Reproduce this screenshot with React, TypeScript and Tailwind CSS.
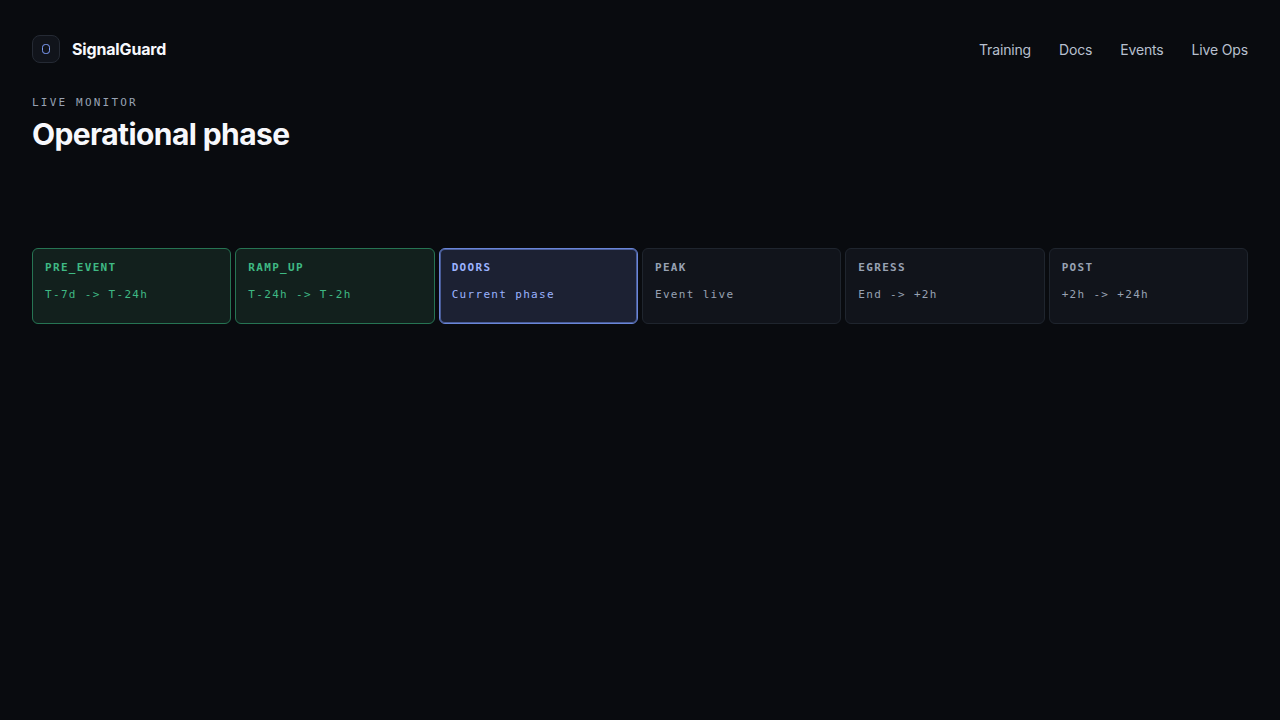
import React from 'react'

type PhaseState = 'done' | 'current' | 'upcoming'

interface Phase {
  name: string
  window: string
  state: PhaseState
}

const links = ['Training', 'Docs', 'Events', 'Live Ops']

const phases: Phase[] = [
  { name: 'PRE_EVENT', window: 'T-7d -> T-24h', state: 'done' },
  { name: 'RAMP_UP', window: 'T-24h -> T-2h', state: 'done' },
  { name: 'DOORS', window: 'Current phase', state: 'current' },
  { name: 'PEAK', window: 'Event live', state: 'upcoming' },
  { name: 'EGRESS', window: 'End -> +2h', state: 'upcoming' },
  { name: 'POST', window: '+2h -> +24h', state: 'upcoming' },
]

const stateStyles: Record<PhaseState, string> = {
  done: 'border-[#267453] bg-[#12201d] text-[#3fb984]',
  current: 'border-[#6a86d8] bg-[#1c2133] text-[#9bb3ff] inset-ring inset-ring-[#4a5d99]',
  upcoming: 'border-[#1f252e] bg-[#11141b] text-[#98a2b3]',
}

const Header = () => (
  <header className="flex items-center justify-between tracking-[-0.01em]">
    <a href="#" className="flex items-center gap-3">
      <span className="flex size-7 items-center justify-center rounded-lg border border-[#252a34] bg-[#11141b]">
        <svg width="8" height="10" viewBox="0 0 8 10" fill="none" aria-hidden="true">
          <rect x="0.5" y="0.5" width="7" height="9" rx="2.8" stroke="#7d9bf5" />
        </svg>
      </span>
      <span className="text-base font-bold text-[#f7f8fc]">SignalGuard</span>
    </a>
    <nav className="flex gap-7 pt-0.5 text-sm text-[#b8c0cf]">
      {links.map((link) => (
        <a key={link} href="#">
          {link}
        </a>
      ))}
    </nav>
  </header>
)

const PhaseCard = ({ name, window, state }: Phase) => (
  <li
    className={`flex h-19 flex-col gap-3 rounded-md border px-3 pt-[11px] font-['DejaVu_Sans_Mono',monospace] text-[11px] leading-[15px] tracking-[0.12em] ${stateStyles[state]}`}
  >
    <strong className="font-bold">{name}</strong>
    <span>{window}</span>
  </li>
)

const App = () => {
  return (
    <div className="min-h-screen bg-[#090b0f] px-8 pt-[35px] font-['Inter',sans-serif]">
      <Header />
      <main className="mt-8">
        <p className="font-['DejaVu_Sans_Mono',monospace] text-[11px] leading-4 tracking-[0.2em] text-[#98a2b3]">
          LIVE MONITOR
        </p>
        <h1 className="mt-[5px] text-3xl font-bold tracking-[-0.02em] text-[#f7f8fc]">
          Operational phase
        </h1>
        <ol className="mt-24 grid grid-cols-6 gap-1">
          {phases.map((phase) => (
            <PhaseCard key={phase.name} {...phase} />
          ))}
        </ol>
      </main>
    </div>
  )
}

export default App
